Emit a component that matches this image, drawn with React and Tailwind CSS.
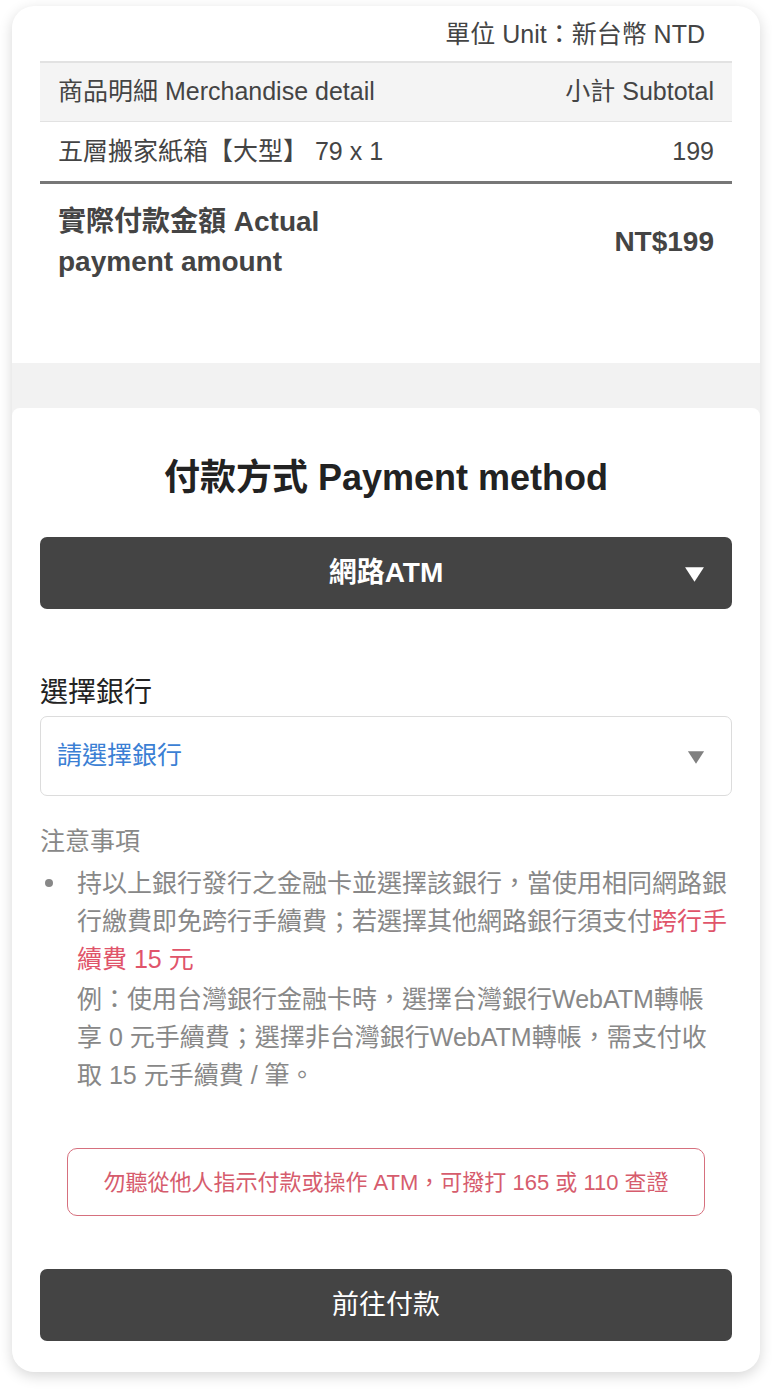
import React from "react";

const font = { fontFamily: '"Liberation Sans", "Noto Sans CJK TC", sans-serif' };

function Caret({ className }) {
  return (
    <svg viewBox="0 0 20 16" className={className} fill="currentColor">
      <path d="M1 1 L19 1 L10 15 Z" />
    </svg>
  );
}

export default function App() {
  return (
    <div className="min-h-screen bg-white pt-[6px] px-[12px] pb-[18px]" style={font}>
      <div className="rounded-[22px] bg-[#f2f2f2] overflow-hidden shadow-[0_4px_14px_rgba(0,0,0,0.16)]">
        {/* order summary */}
        <section className="bg-white px-[28px] pt-[9px] pb-[81px]">
          <div className="text-right text-[25px] leading-[38px] text-[#444] pr-[27px]">單位 Unit：新台幣 NTD</div>
          <div className="mt-[8px] flex items-center justify-between h-[61px] bg-[#f4f4f4] border-t-2 border-b border-[#e2e2e2] px-[18px] text-[25px] text-[#444]">
            <span>商品明細 Merchandise detail</span>
            <span>小計 Subtotal</span>
          </div>
          <div className="flex items-center justify-between h-[62px] px-[18px] text-[25px] text-[#444] border-b-[3px] border-[#777]">
            <span>五層搬家紙箱【大型】 79 x 1</span>
            <span>199</span>
          </div>
          <div className="flex items-center justify-between px-[18px] pt-[18px] text-[28px] font-bold text-[#444]">
            <span className="leading-[40px] w-[300px]">實際付款金額 Actual payment amount</span>
            <span>NT$199</span>
          </div>
        </section>

        {/* payment method */}
        <section className="mt-[45px] bg-white rounded-t-[8px] px-[28px] pt-[48px] pb-[31px]">
          <h2 className="text-center text-[36px] font-bold text-[#222] leading-[44px]">付款方式 Payment method</h2>
          <button className="mt-[37px] relative w-full h-[72px] rounded-[7px] bg-[#444] text-white text-[28px] font-bold flex items-center justify-center">
            網路ATM
            <Caret className="absolute right-[27px] top-[29px] w-[21px] h-[17px]" />
          </button>

          <div className="mt-[66px] text-[28px] leading-[36px] text-[#222]">選擇銀行</div>
          <div className="mt-[5px] relative h-[80px] rounded-[7px] border border-[#dcdcdc] flex items-center px-[16px] text-[25px] text-[#3b7fd4]">
            請選擇銀行
            <Caret className="absolute right-[26px] top-[33px] w-[18px] h-[15px] text-[#808080]" />
          </div>

          <div className="mt-[28px] text-[25px] leading-[34px] text-[#888]">注意事項</div>
          <div className="mt-[6px] flex text-[25px] leading-[38px] text-[#888]">
            <span className="w-[37px] shrink-0 flex pt-[15px] pl-[5px]">
              <span className="w-[8px] h-[8px] rounded-full bg-[#888]" />
            </span>
            <div className="w-[655px]">
              <p>
                持以上銀行發行之金融卡並選擇該銀行，當使用相同網路銀行繳費即免跨行手續費；若選擇其他網路銀行須支付<span className="text-[#e0546a]">跨行手續費 15 元</span>
              </p>
              <p className="mt-[2px]">
                例：使用台灣銀行金融卡時，選擇台灣銀行WebATM轉帳
                <br />
                享 0 元手續費；選擇非台灣銀行WebATM轉帳，需支付收
                <br />
                取 15 元手續費 / 筆。
              </p>
            </div>
          </div>

          <div className="mt-[54px] mx-[27px] h-[68px] rounded-[10px] border-[1.5px] border-[#d6707e] flex items-center justify-center text-[22px] text-[#d65c6d]">
            勿聽從他人指示付款或操作 ATM，可撥打 165 或 110 查證
          </div>

          <button className="mt-[53px] w-full h-[72px] rounded-[7px] bg-[#444] text-white text-[27px] flex items-center justify-center">
            前往付款
          </button>
        </section>
      </div>
    </div>
  );
}
